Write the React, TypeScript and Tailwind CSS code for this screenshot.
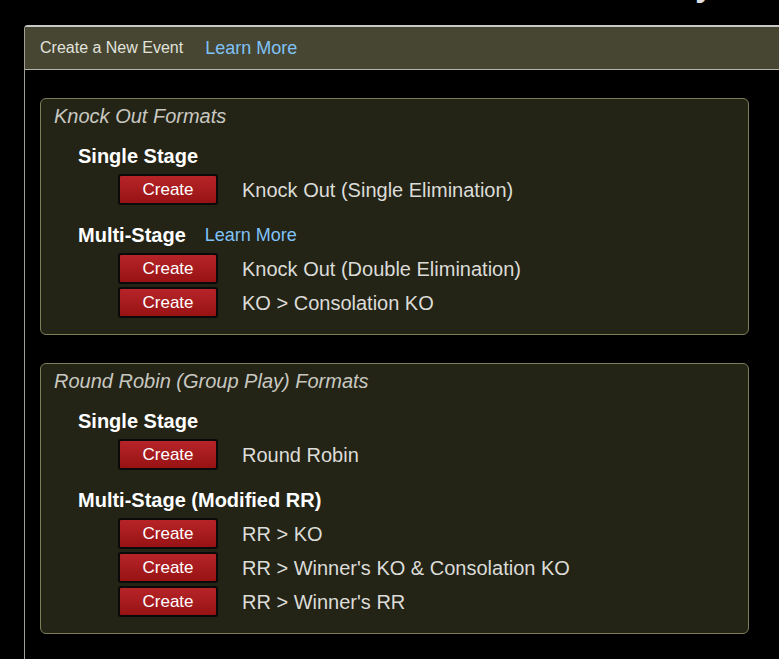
import React from 'react';

type Format = { label: string };

type Stage = {
    title: string;
    learnMore?: boolean;
    formats: Format[];
};

type Group = {
    title: string;
    stages: Stage[];
};

const GROUPS: Group[] = [
    {
        title: 'Knock Out Formats',
        stages: [
            { title: 'Single Stage', formats: [{ label: 'Knock Out (Single Elimination)' }] },
            {
                title: 'Multi-Stage',
                learnMore: true,
                formats: [{ label: 'Knock Out (Double Elimination)' }, { label: 'KO > Consolation KO' }],
            },
        ],
    },
    {
        title: 'Round Robin (Group Play) Formats',
        stages: [
            { title: 'Single Stage', formats: [{ label: 'Round Robin' }] },
            {
                title: 'Multi-Stage (Modified RR)',
                formats: [
                    { label: 'RR > KO' },
                    { label: "RR > Winner's KO & Consolation KO" },
                    { label: "RR > Winner's RR" },
                ],
            },
        ],
    },
];

const CreateButton: React.FC = () => (
    <button className="flex h-[31px] w-[100px] items-center justify-center rounded-[3px] border-2 border-[#0a0a0a] bg-gradient-to-b from-[#b62428] to-[#981214] text-[17px] leading-none text-white">
        Create
    </button>
);

const StageBlock: React.FC<{ stage: Stage; first: boolean }> = ({ stage, first }) => (
    <div className={first ? 'mt-4' : 'mt-[18px]'}>
        <div className="flex items-center pl-[37px]">
            <span className="text-[20px] font-bold leading-[24px] text-white">{stage.title}</span>
            {stage.learnMore && (
                <span className="ml-[19px] text-[18px] leading-[24px] text-[#80c2f6]">Learn More</span>
            )}
        </div>
        <div className="mt-[6px] flex flex-col gap-[3px] pl-[77px]">
            {stage.formats.map((f) => (
                <div key={f.label} className="flex items-center">
                    <CreateButton />
                    <span className="ml-6 text-[20px] leading-none text-[#dcdcd8]">{f.label}</span>
                </div>
            ))}
        </div>
    </div>
);

const GroupCard: React.FC<{ group: Group }> = ({ group }) => (
    <div className="w-[709px] rounded-[6px] border border-[#7e7e58] bg-[#232316] pt-[5px] pb-[16px]">
        <div className="pl-[13px] text-[20px] italic leading-[24px] text-[#c8c8c0]">{group.title}</div>
        {group.stages.map((s, i) => (
            <StageBlock key={s.title} stage={s} first={i === 0} />
        ))}
    </div>
);

export default function App() {
    return (
        <div
            className="h-[659px] w-[779px] overflow-hidden bg-black"
            style={{ fontFamily: '"Liberation Sans", Arial, sans-serif' }}
        >
            <div className="flex h-[25px] justify-end overflow-hidden pr-[66px]">
                <h1 className="mt-[-31px] text-[32px] font-bold leading-none text-[#e0e0e0]">Tournament Directory</h1>
            </div>

            <div className="ml-[24px] w-[800px] rounded-tl-[4px] border-t-2 border-l border-[#c8c8c8] border-l-[#a0a098]">
                <div className="flex h-[43px] items-center border-b border-[#b4b4a8] bg-[#464632] pl-[15px]">
                    <span className="text-[16px] text-[#e2e2dc]">Create a New Event</span>
                    <span className="ml-[22px] text-[18px] text-[#80c2f6]">Learn More</span>
                </div>
                <div className="flex flex-col gap-[28px] pl-[15px] pt-[28px] pb-10">
                    {GROUPS.map((g) => (
                        <GroupCard key={g.title} group={g} />
                    ))}
                </div>
            </div>
        </div>
    );
}
